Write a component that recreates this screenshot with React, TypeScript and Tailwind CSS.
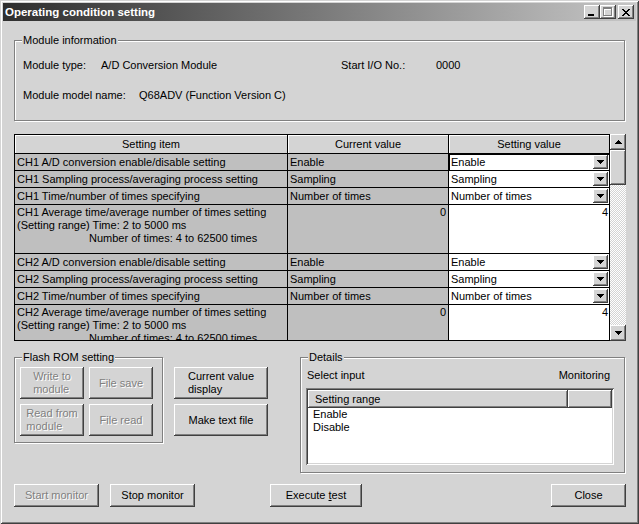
import type { ReactNode } from 'react';

const raised =
  'shadow-[inset_-1px_-1px_0_#404040,inset_1px_1px_0_#ffffff,inset_-2px_-2px_0_#808080,inset_2px_2px_0_#d4d4d4]';
const disabledText = 'text-[#808080] [text-shadow:1px_1px_0_#ffffff]';

function Arrow({ up }: { up?: boolean }) {
  return (
    <svg width="7" height="4" viewBox="0 0 7 4" shapeRendering="crispEdges">
      <path
        d={
          up
            ? 'M3 0h1v1H3zM2 1h3v1H2zM1 2h5v1H1zM0 3h7v1H0z'
            : 'M0 0h7v1H0zM1 1h5v1H1zM2 2h3v1H2zM3 3h1v1H3z'
        }
        fill="#000"
      />
    </svg>
  );
}

function TitleBar() {
  return (
    <div className="h-[18px] flex items-center justify-between pl-[2px] pr-[2px] bg-[linear-gradient(to_right,#2e2e2e,#c6c6c6)]">
      <span className="text-white font-bold text-[11.5px] leading-[14px]">Operating condition setting</span>
      <div className="flex items-center">
        {/* minimize */}
        <div className={`w-[16px] h-[14px] bg-[#d4d4d4] ${raised} flex items-end pl-[4px] pb-[3px]`}>
          <div className="w-[6px] h-[2px] bg-black" />
        </div>
        {/* maximize (disabled) */}
        <div className={`w-[16px] h-[14px] bg-[#d4d4d4] ${raised} flex items-center justify-center`}>
          <svg width="10" height="10" viewBox="0 0 10 10" shapeRendering="crispEdges">
            <path d="M1 1h9v9H1zM2 3v6h7V3z" fill="#ffffff" fillRule="evenodd" />
            <path d="M0 0h9v9H0zM1 2v6h7V2z" fill="#808080" fillRule="evenodd" />
          </svg>
        </div>
        {/* close */}
        <div className={`w-[16px] h-[14px] ml-[2px] bg-[#d4d4d4] ${raised} flex items-center justify-center`}>
          <svg width="8" height="7" viewBox="0 0 8 7" shapeRendering="crispEdges">
            <path
              d="M0 0h2v1H0zM6 0h2v1H6zM1 1h2v1H1zM5 1h2v1H5zM2 2h4v1H2zM3 3h2v1H3zM2 4h4v1H2zM1 5h2v1H1zM5 5h2v1H5zM0 6h2v1H0zM6 6h2v1H6z"
              fill="#000"
            />
          </svg>
        </div>
      </div>
    </div>
  );
}

function Group({ title, className, children }: { title: string; className: string; children: ReactNode }) {
  return (
    <div className={`relative border border-[#808080] shadow-[inset_1px_1px_0_#ffffff,1px_1px_0_#ffffff] ${className}`}>
      <span className="absolute -top-[7px] left-[7px] px-[1px] bg-[#d4d4d4]">{title}</span>
      {children}
    </div>
  );
}

function Button({
  children,
  className,
  disabled,
}: {
  children: ReactNode;
  className: string;
  disabled?: boolean;
}) {
  return (
    <div className={`bg-[#d4d4d4] ${raised} flex items-center justify-center ${className} ${disabled ? disabledText : ''}`}>
      <div className="text-left">{children}</div>
    </div>
  );
}

function ItemCell({ children }: { children: ReactNode }) {
  return (
    <div className="h-[17px] border-r border-b border-black bg-[#bfbfbf] pl-[2px] leading-[16px] whitespace-nowrap overflow-hidden">
      {children}
    </div>
  );
}

function Combo({ value, focus }: { value: string; focus?: boolean }) {
  return (
    <div
      className={`h-[17px] border-r border-b border-black bg-white flex items-center pl-[2px] ${
        focus ? 'shadow-[inset_1px_1px_0_#000000]' : ''
      }`}
    >
      <span className="flex-1 leading-[16px]">{value}</span>
      <div className={`w-[15px] h-[14px] mr-[1px] flex items-center justify-center bg-[#d4d4d4] ${raised}`}>
        <Arrow />
      </div>
    </div>
  );
}

function Channel({ ch, first }: { ch: string; first?: boolean }) {
  return (
    <>
      <ItemCell>{ch} A/D conversion enable/disable setting</ItemCell>
      <ItemCell>Enable</ItemCell>
      <Combo value="Enable" focus={first} />

      <ItemCell>{ch} Sampling process/averaging process setting</ItemCell>
      <ItemCell>Sampling</ItemCell>
      <Combo value="Sampling" />

      <ItemCell>{ch} Time/number of times specifying</ItemCell>
      <ItemCell>Number of times</ItemCell>
      <Combo value="Number of times" />

      <div className="h-[49px] border-r border-b border-black bg-[#bfbfbf] pl-[2px] pt-[1px] whitespace-nowrap">
        <div>{ch} Average time/average number of times setting</div>
        <div>(Setting range) Time: 2 to 5000 ms</div>
        <div className="pl-[72px]">Number of times: 4 to 62500 times</div>
      </div>
      <div className="h-[49px] border-r border-b border-black bg-[#bfbfbf] pr-[2px] pt-[1px] text-right">0</div>
      <div className="h-[49px] border-r border-b border-black bg-white pr-[1px] pt-[1px] text-right">4</div>
    </>
  );
}

function SettingTable() {
  const head = 'h-[19px] border-r border-b border-black bg-[#d4d4d4] shadow-[inset_1px_1px_0_#ffffff] text-center leading-[18px]';
  return (
    <div className="flex mt-[13px]">
      <div className="w-[596px] h-[207px] border-t border-l border-b border-black overflow-hidden">
        <div className="grid grid-cols-[273px_161px_161px]">
          <div className={head}>Setting item</div>
          <div className={head}>Current value</div>
          <div className={head}>Setting value</div>
          <Channel ch="CH1" first />
          <Channel ch="CH2" />
        </div>
      </div>
      <div className="w-[16px] h-[207px] flex flex-col">
        <div className={`h-[16px] bg-[#d4d4d4] ${raised} flex items-center justify-center`}>
          <Arrow up />
        </div>
        <div className={`h-[35px] bg-[#d4d4d4] ${raised}`} />
        <div className="flex-1 bg-[repeating-conic-gradient(#ffffff_0%_25%,#d4d4d4_0%_50%)] bg-[length:2px_2px]" />
        <div className={`h-[16px] bg-[#d4d4d4] ${raised} flex items-center justify-center`}>
          <Arrow />
        </div>
      </div>
    </div>
  );
}

export default function App() {
  return (
    <div className="w-[639px] h-[524px] bg-[#d4d4d4] p-[3px] flex flex-col overflow-hidden font-['Liberation_Sans',Arial,sans-serif] text-[11px] leading-[13px] text-black shadow-[inset_1px_1px_0_#d4d4d4,inset_-1px_-1px_0_#404040,inset_2px_2px_0_#ffffff,inset_-2px_-2px_0_#808080]">
      <TitleBar />
      <div className="flex flex-col pl-[11px] pr-[10px]">
        {/* Module information */}
        <Group title="Module information" className="mt-[19px] w-[611px] h-[81px]">
          <div className="flex flex-col gap-[17px] pl-[8px] pt-[18px]">
            <div className="flex">
              <span className="w-[78px]">Module type:</span>
              <span className="w-[240px]">A/D Conversion Module</span>
              <span className="w-[95px]">Start I/O No.:</span>
              <span>0000</span>
            </div>
            <div className="flex">
              <span className="w-[116px]">Module model name:</span>
              <span>Q68ADV (Function Version C)</span>
            </div>
          </div>
        </Group>

        <SettingTable />

        <div className="flex items-start mt-[16px]">
          <Group title="Flash ROM setting" className="w-[149px] h-[86px]">
            <div className="grid grid-cols-[64px_64px] gap-[5px] pl-[5px] pt-[9px]">
              <Button className="h-[32px]" disabled>
                Write to
                <br />
                module
              </Button>
              <Button className="h-[32px]" disabled>
                File save
              </Button>
              <Button className="h-[32px]" disabled>
                Read from
                <br />
                module
              </Button>
              <Button className="h-[32px]" disabled>
                File read
              </Button>
            </div>
          </Group>

          <div className="flex flex-col gap-[5px] ml-[11px] mt-[10px]">
            <Button className="w-[94px] h-[32px]">
              Current value
              <br />
              display
            </Button>
            <Button className="w-[94px] h-[32px]">Make text file</Button>
          </div>

          <Group title="Details" className="ml-[32px] w-[325px] h-[116px]">
            <div className="flex justify-between pl-[6px] pr-[14px] pt-[11px]">
              <span>Select input</span>
              <span>Monitoring</span>
            </div>
            <div className="mt-[6px] ml-[5px] w-[308px] h-[77px] bg-white p-[2px] flex flex-col shadow-[inset_1px_1px_0_#808080,inset_-1px_-1px_0_#ffffff,inset_2px_2px_0_#404040,inset_-2px_-2px_0_#d4d4d4]">
              <div className="flex h-[18px]">
                <div className={`w-[260px] bg-[#d4d4d4] ${raised} pl-[7px] leading-[18px]`}>Setting range</div>
                <div className={`flex-1 bg-[#d4d4d4] ${raised}`} />
              </div>
              <div className="pl-[5px]">
                <div>Enable</div>
                <div>Disable</div>
              </div>
            </div>
          </Group>
        </div>

        <div className="flex mt-[11px]">
          <Button className="w-[85px] h-[23px]" disabled>
            Start monitor
          </Button>
          <Button className="w-[85px] h-[23px] ml-[11px]">Stop monitor</Button>
          <Button className="w-[92px] h-[23px] ml-[75px]">
            <span>
              Execute <span className="underline">t</span>est
            </span>
          </Button>
          <Button className="w-[75px] h-[23px] ml-auto">Close</Button>
        </div>
      </div>
    </div>
  );
}
